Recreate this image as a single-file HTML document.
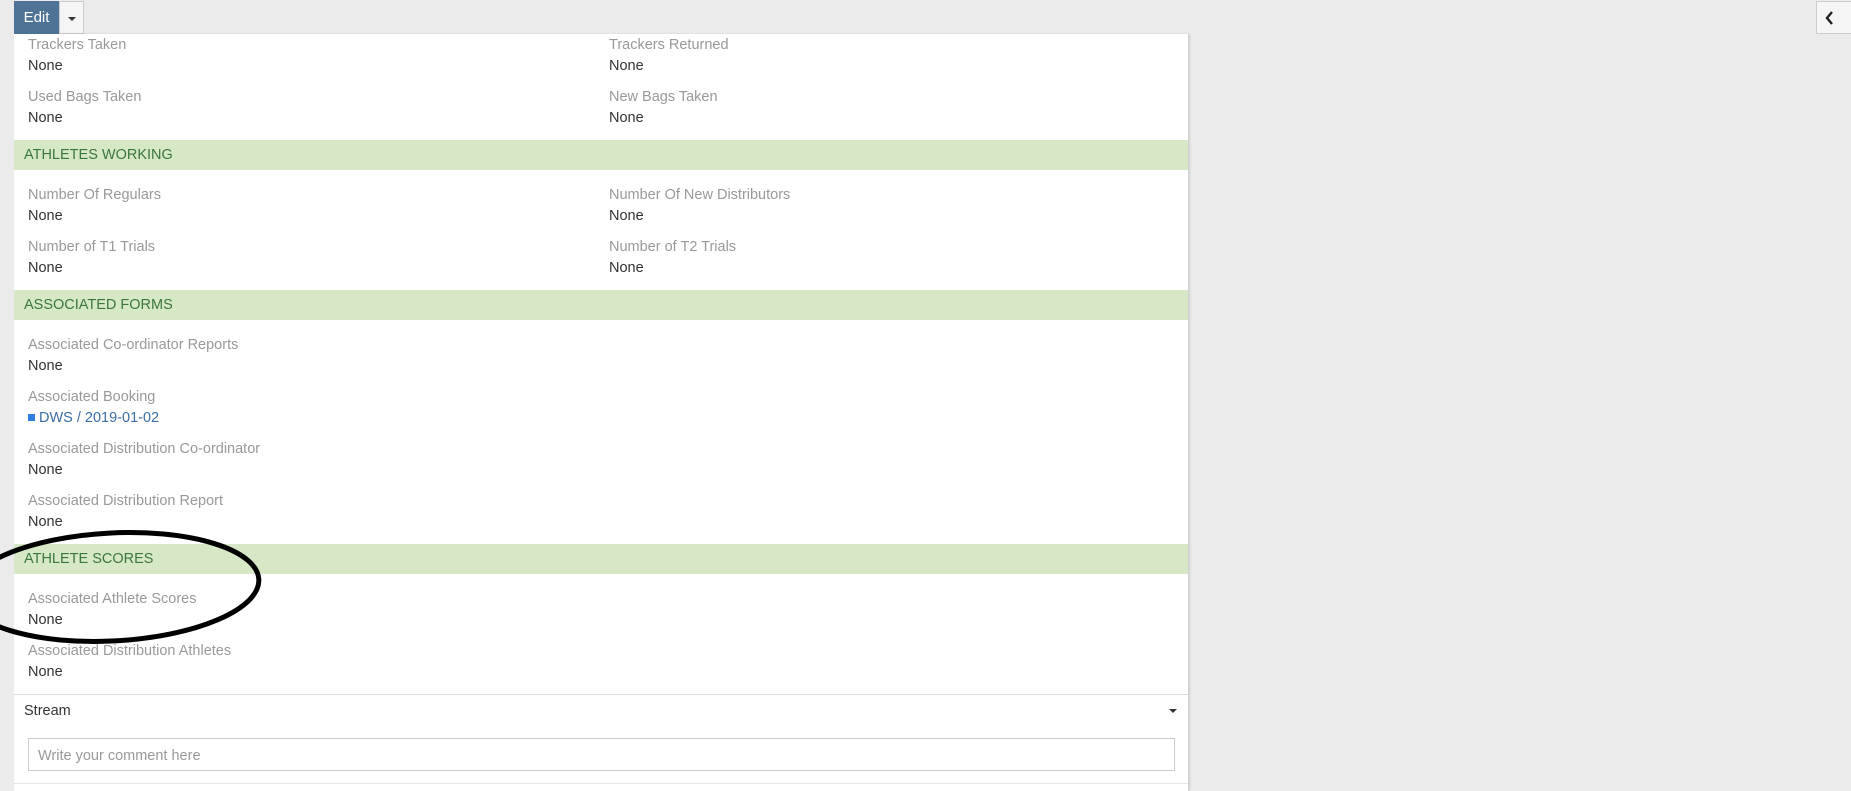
<!DOCTYPE html>
<html><head><meta charset="utf-8"><style>
*{margin:0;padding:0;box-sizing:border-box}
html,body{width:1851px;height:791px;overflow:hidden;background:#ebebeb;font-family:"Liberation Sans",sans-serif;position:relative}
.panel{position:absolute;left:14px;top:34px;width:1174px;height:757px;background:#fff;box-shadow:2px 0 2px rgba(0,0,0,.12)}
.t{position:absolute;font-size:14.5px;white-space:nowrap;line-height:18px}
.l{color:#999}
.v{color:#333}
.h{position:absolute;left:14px;width:1174px;height:30px;background:#d6e8c6;color:#3c763d;font-size:14.5px;line-height:31px;padding-left:10px}
</style></head><body>
<div style="position:absolute;left:14px;top:1px;width:45px;height:33px;background:#4e7396;color:#fff;font-size:15px;line-height:34px;text-align:center">Edit</div>
<div style="position:absolute;left:59px;top:1px;width:25px;height:33px;background:#f5f5f5;border:1px solid #ccc"><div style="position:absolute;left:8px;top:15px;border-left:4px solid transparent;border-right:4px solid transparent;border-top:4px solid #333"></div></div>
<div style="position:absolute;left:1816px;top:1px;width:36px;height:33px;background:#f5f5f5;border:1px solid #ccc"><svg width="36" height="33" style="position:absolute;left:0;top:0"><path d="M15 10 L10 16 L15 22" stroke="#222" stroke-width="2.4" fill="none"/></svg></div>
<div class="panel"></div>

<div class="t l" style="left:28px;top:36px">Trackers Taken</div><div class="t v" style="left:28px;top:57px">None</div>
<div class="t l" style="left:609px;top:36px">Trackers Returned</div><div class="t v" style="left:609px;top:57px">None</div>
<div class="t l" style="left:28px;top:88px">Used Bags Taken</div><div class="t v" style="left:28px;top:109px">None</div>
<div class="t l" style="left:609px;top:88px">New Bags Taken</div><div class="t v" style="left:609px;top:109px">None</div>

<div class="h" style="top:140px">ATHLETES WORKING</div>
<div class="t l" style="left:28px;top:186px">Number Of Regulars</div><div class="t v" style="left:28px;top:207px">None</div>
<div class="t l" style="left:609px;top:186px">Number Of New Distributors</div><div class="t v" style="left:609px;top:207px">None</div>
<div class="t l" style="left:28px;top:238px">Number of T1 Trials</div><div class="t v" style="left:28px;top:259px">None</div>
<div class="t l" style="left:609px;top:238px">Number of T2 Trials</div><div class="t v" style="left:609px;top:259px">None</div>

<div class="h" style="top:290px">ASSOCIATED FORMS</div>
<div class="t l" style="left:28px;top:336px">Associated Co-ordinator Reports</div><div class="t v" style="left:28px;top:357px">None</div>
<div class="t l" style="left:28px;top:388px">Associated Booking</div><div class="t" style="left:28px;top:409px;color:#3a6ea5"><span style="display:inline-block;width:7px;height:7px;background:#2f7fe0;margin-right:4px;vertical-align:1px"></span>DWS / 2019-01-02</div>
<div class="t l" style="left:28px;top:440px">Associated Distribution Co-ordinator</div><div class="t v" style="left:28px;top:461px">None</div>
<div class="t l" style="left:28px;top:492px">Associated Distribution Report</div><div class="t v" style="left:28px;top:513px">None</div>

<div class="h" style="top:544px">ATHLETE SCORES</div>
<div class="t l" style="left:28px;top:590px">Associated Athlete Scores</div><div class="t v" style="left:28px;top:611px">None</div>
<div class="t l" style="left:28px;top:642px">Associated Distribution Athletes</div><div class="t v" style="left:28px;top:663px">None</div>

<div style="position:absolute;left:14px;top:694px;width:1174px;height:1px;background:#ddd"></div>
<div class="t" style="left:24px;top:702px;color:#333">Stream</div>
<div style="position:absolute;left:1169px;top:709px;border-left:4px solid transparent;border-right:4px solid transparent;border-top:4px solid #333"></div>
<div style="position:absolute;left:28px;top:738px;width:1147px;height:33px;border:1px solid #ccc;background:#fff"><span class="t l" style="left:9px;top:8px">Write your comment here</span></div>
<div style="position:absolute;left:14px;top:783px;width:1174px;height:1px;background:#e5e5e5"></div>

<svg width="300" height="140" style="position:absolute;left:0;top:520px" viewBox="0 520 300 140"><ellipse cx="112" cy="587" rx="147" ry="54" transform="rotate(-3 112 587)" fill="none" stroke="#000" stroke-width="5"/></svg>
</body></html>
